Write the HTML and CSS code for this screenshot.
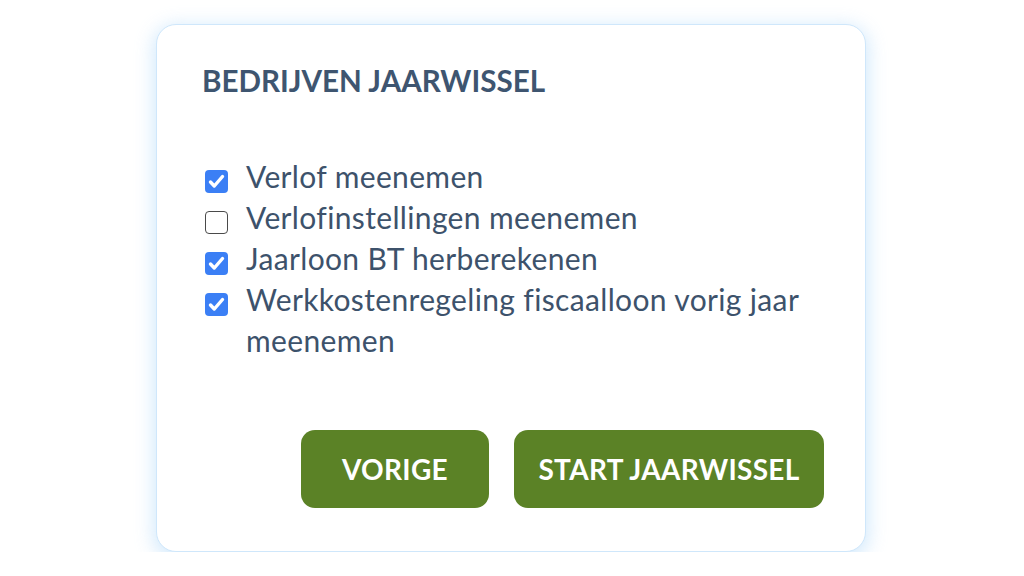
FILE: index.html
```html
<!DOCTYPE html>
<html lang="nl">
<head>
<meta charset="utf-8">
<link rel="stylesheet" href="styles.css">
</head>
<body>
<div class="card">
  <h1 class="title">BEDRIJVEN JAARWISSEL</h1>
  <ul class="options">
    <li class="option"><span class="box checked"><svg viewBox="0 0 23 23"><path d="M5.5 12l3.8 4L17.5 6.5" /></svg></span><span class="label">Verlof meenemen</span></li>
    <li class="option"><span class="box"></span><span class="label">Verlofinstellingen meenemen</span></li>
    <li class="option"><span class="box checked"><svg viewBox="0 0 23 23"><path d="M5.5 12l3.8 4L17.5 6.5" /></svg></span><span class="label">Jaarloon BT herberekenen</span></li>
    <li class="option"><span class="box checked"><svg viewBox="0 0 23 23"><path d="M5.5 12l3.8 4L17.5 6.5" /></svg></span><span class="label">Werkkostenregeling fiscaalloon vorig jaar meenemen</span></li>
  </ul>
  <div class="actions">
    <button class="btn btn-prev">VORIGE</button>
    <button class="btn btn-start">START JAARWISSEL</button>
  </div>
</div>
</body>
</html>
```
FILE: styles.css
```css
html, body {
  margin: 0;
  padding: 0;
  background: #ffffff;
}
body {
  font-family: "Lato", "Noto Sans", sans-serif;
  color: #3d526b;
}
.card {
  box-sizing: border-box;
  width: 710px;
  height: 528px;
  margin: 24px 0 0 156px;
  padding: 36px 41px 0 47px;
  border: 1px solid #cfe7fb;
  border-radius: 20px;
  background: #fff;
  box-shadow: 0 4px 18px 3px rgba(160, 208, 248, 0.45);
  display: flex;
  flex-direction: column;
}
.title {
  margin: 0 0 0 -2px;
  font-size: 29.6px;
  line-height: 40px;
  font-weight: 700;
  color: #3e5570;
  letter-spacing: 0;
}
.options {
  list-style: none;
  margin: 55px 0 0 0;
  padding: 0;
  display: flex;
  flex-direction: column;
  gap: 0;
}
.option {
  display: flex;
  align-items: flex-start;
  gap: 18px;
  font-size: 30px;
  line-height: 41px;
  letter-spacing: 0.35px;
}
.label {
  flex: 1;
  max-width: 570px;
}
.box {
  flex: none;
  box-sizing: border-box;
  width: 23px;
  height: 23px;
  margin: 14px 0 0 1px;
  border: 1.5px solid #4a4a4a;
  border-radius: 4px;
  background: #fff;
  display: flex;
  align-items: center;
  justify-content: center;
}
.box.checked {
  border: none;
  background: #3b7ff5;
}
.box svg {
  width: 23px;
  height: 23px;
  fill: none;
  stroke: #fff;
  stroke-width: 3.4;
  stroke-linecap: round;
  stroke-linejoin: round;
}
.actions {
  margin-top: auto;
  margin-bottom: 43px;
  display: flex;
  justify-content: flex-end;
  gap: 25px;
}
.btn {
  height: 78px;
  border: none;
  border-radius: 14px;
  background: #5b8226;
  color: #fff;
  font-family: "Lato", "Noto Sans", sans-serif;
  font-size: 28px;
  font-weight: 700;
  letter-spacing: 0.3px;
  padding: 0 20px;
}
.btn-prev {
  width: 188px;
}
.btn-start {
  width: 310px;
}
```
